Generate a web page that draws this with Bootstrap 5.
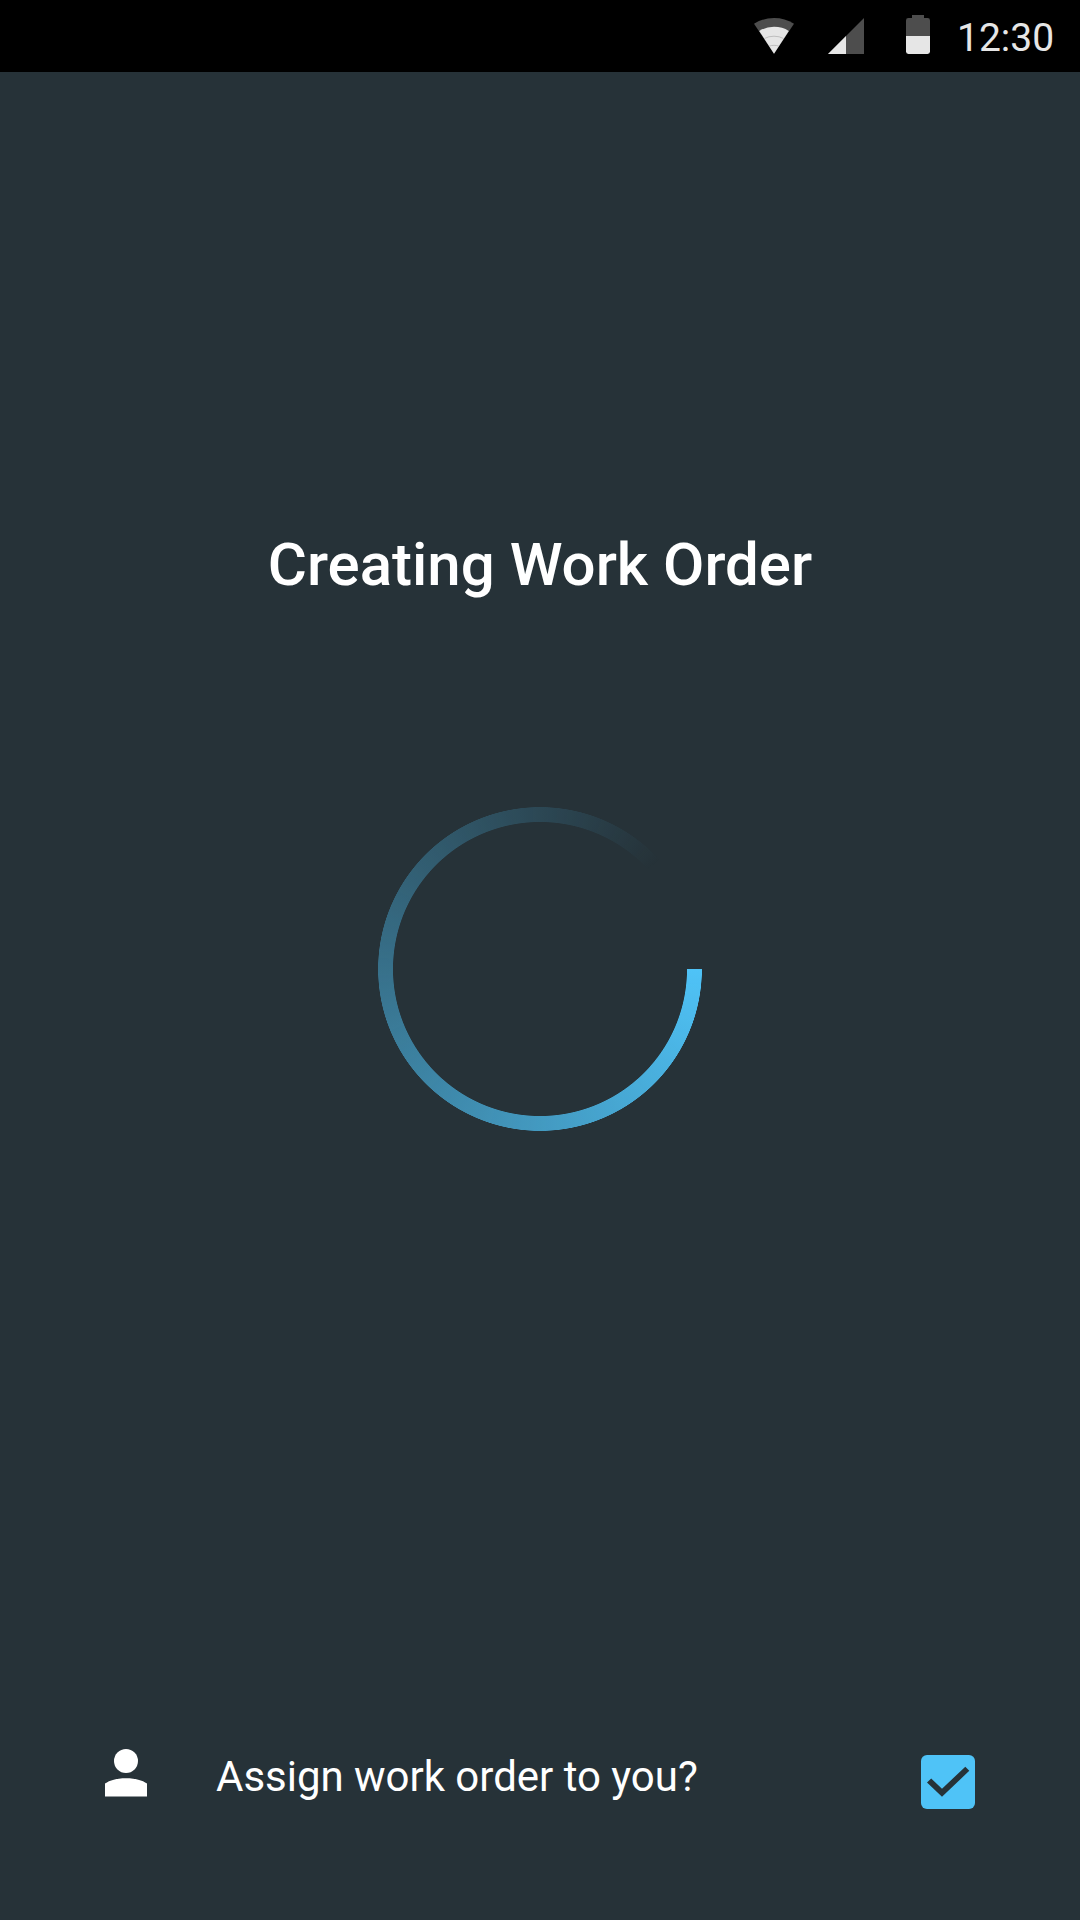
<!DOCTYPE html>
<html lang="en">
<head>
<meta charset="utf-8">
<meta name="viewport" content="width=device-width, initial-scale=1">
<title>Creating Work Order</title>
<link rel="stylesheet" href="https://cdn.jsdelivr.net/npm/bootstrap@5.3.0/dist/css/bootstrap.min.css">
<style>
  body { font-family: Roboto, "Noto Sans", sans-serif; background: #263238; color: #fff; overflow: hidden; }
  .screen { width: 1080px; height: 1920px; }
  .statusbar { height: 72px; padding-right: 27px; }
  .clock { margin-left: 27px; width: 96px; font-size: 39px; line-height: 68px; padding-top: 4px; color: #e6e6e6; }
  .heading { margin-top: 457px; font-size: 60px; line-height: 72px; font-weight: 500; }
  .spinner-ring {
    width: 324px; height: 324px; margin-top: 206px;
    background: conic-gradient(from 90deg, #4fc3f7 0deg, rgba(79,195,247,0) 318deg);
    -webkit-mask: radial-gradient(circle closest-side, transparent 146.6px, #000 147.4px, #000 161.6px, transparent 162.2px);
    mask: radial-gradient(circle closest-side, transparent 146.6px, #000 147.4px, #000 161.6px, transparent 162.2px);
  }
  .assign { padding: 0 96px 102px 90px; height: 174px; }
  .assign-person { margin-top: -9px; }
  .assign-label { margin: 1px 0 0 54px; font-size: 42px; line-height: 60px; letter-spacing: -.02px; }
</style>
</head>
<body>
<div class="screen d-flex flex-column">
  <header class="statusbar bg-black d-flex justify-content-end align-items-center flex-shrink-0">
    <svg width="180" height="72" viewBox="750 0 180 72" aria-hidden="true">
      <path fill="#4d4d4d" d="M774 53.7 754 23.7Q763 18 774 18T794 23.7Z"/>
      <path fill="#e6e6e6" d="M774 53.7 759.2 31Q765.500 26.800 774 26.800T788.800 31Z"/>
      <path fill="none" stroke="#b4b4b4" stroke-width=".8" d="M764.500 38.500Q768.500 36.200 774 36.200T783.500 38.500M769 46.300Q771 45.300 774 45.300T779 46.300"/>
      <path fill="#4d4d4d" d="M864 18V54H828Z"/>
      <path fill="#e6e6e6" d="M846 36V54H828Z"/>
      <path fill="#4d4d4d" d="M906 36V20.400Q906 18 908.400 18H912V15H924V18H927.600Q930 18 930 20.400V36Z"/>
      <path fill="#e6e6e6" d="M906 36H930V51.600Q930 54 927.600 54H908.400Q906 54 906 51.600Z"/>
    </svg>
    <div class="clock text-nowrap">12:30</div>
  </header>
  <main class="flex-grow-1 d-flex flex-column align-items-center">
    <h1 class="heading mb-0 text-center text-nowrap">Creating Work Order</h1>
    <div class="spinner-ring" role="status" aria-label="Loading"></div>
  </main>
  <footer class="assign d-flex align-items-start flex-shrink-0">
    <svg class="assign-person flex-shrink-0" width="72" height="72" viewBox="90 1737 72 72" aria-hidden="true">
      <circle cx="126" cy="1761" r="12" fill="#fff"/>
      <path fill="#fff" d="M105 1796.600V1783.600C109.500 1780.300 117 1778.300 126 1778.300S142.500 1780.300 147 1783.600V1796.600Z"/>
    </svg>
    <label class="assign-label text-nowrap">Assign work order to you?</label>
    <svg class="flex-shrink-0 ms-auto" width="72" height="72" viewBox="912 1746 72 72" role="img" aria-label="Checked">
      <rect x="921" y="1755" width="54" height="54" rx="6" fill="#4fc3f7"/>
      <path fill="#263238" d="M942 1796.800 927 1782.500 931.200 1778.500 942 1788.700 965.300 1766.800 969.300 1770.800Z"/>
    </svg>
  </footer>
</div>
<script src="https://cdn.jsdelivr.net/npm/bootstrap@5.3.0/dist/js/bootstrap.bundle.min.js"></script>
</body>
</html>
